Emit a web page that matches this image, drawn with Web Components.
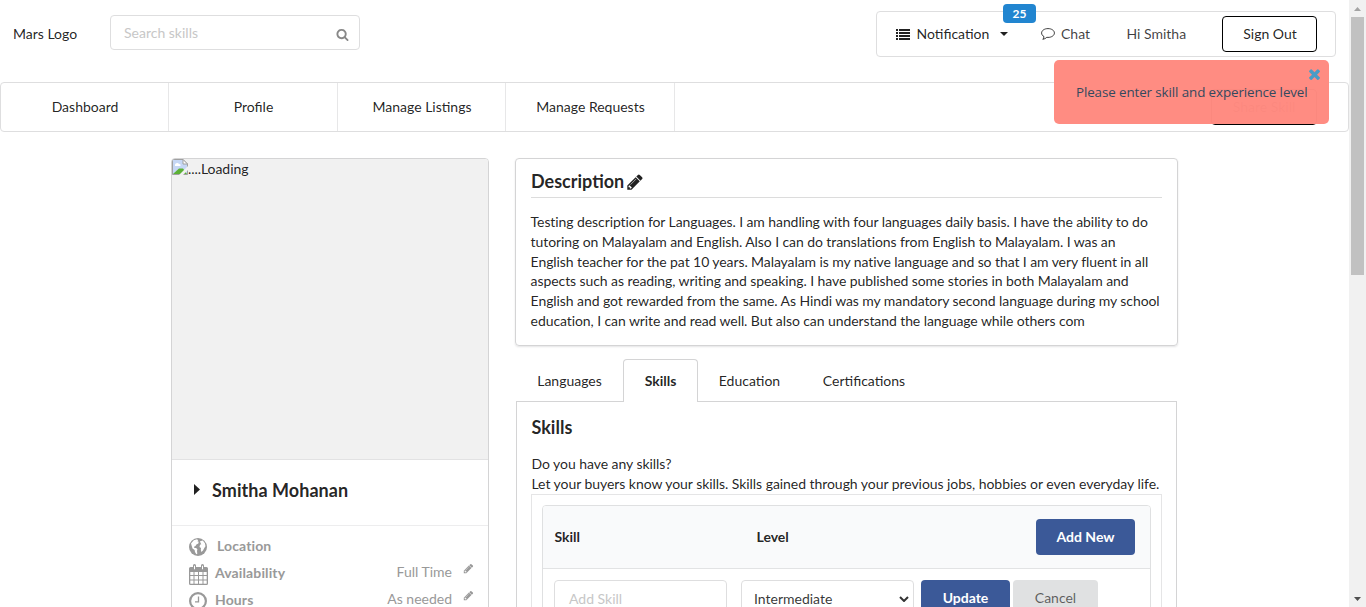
<!DOCTYPE html>
<html lang="en">
<head>
<meta charset="utf-8">
<title>Profile</title>
<style>
html,body{margin:0;height:100%;overflow:hidden;background:#fff}
body{font:14px/20px Lato,"Liberation Sans",sans-serif;color:rgba(0,0,0,.87)}
</style>
</head>
<body>
<mars-app></mars-app>
<script>
const define = (name, html, setup) => customElements.define(name, class extends HTMLElement {
  constructor() {
    super();
    const t = document.createElement('template');
    t.innerHTML = '<style>*{box-sizing:border-box}:host([hidden]){display:none}</style>' + html;
    this.attachShadow({mode: 'open'}).append(t.content.cloneNode(true));
  }
  connectedCallback() { if (setup) setup(this, this.shadowRoot); }
});

const icons = {
  pencil: ['0 0 1792 1792', '<path d="M491 1536l91-91-235-235-91 91v107h128v128h107zm523-928q0-22-22-22-10 0-17 7l-542 542q-7 7-7 17 0 22 22 22 10 0 17-7l542-542q7-7 7-17zm-54-192l416 416-832 832h-416v-416zm683 96q0 53-37 90l-166 166-416-416 166-165q36-38 90-38 53 0 91 38l235 234q37 39 37 91z"/>'],
  search: ['0 0 1792 1792', '<path d="M1216 832q0-185-131.5-316.5t-316.5-131.5-316.5 131.5-131.5 316.5 131.5 316.5 316.5 131.5 316.5-131.5 131.5-316.5zm512 832q0 52-38 90t-90 38q-54 0-90-38l-343-342q-179 124-399 124-143 0-273.5-55.5t-225-150-150-225-55.5-273.5 55.5-273.5 150-225 225-150 273.5-55.5 273.5 55.5 225 150 150 225 55.5 273.5q0 220-124 399l343 343q37 37 37 90z"/>'],
  times: ['298 214 1196 1344', '<path d="M1490 1322q0 40-28 68l-136 136q-28 28-68 28t-68-28l-294-294-294 294q-28 28-68 28t-68-28l-136-136q-28-28-28-68t28-68l294-294-294-294q-28-28-28-68t28-68l136-136q28-28 68-28t68 28l294 294 294-294q28-28 68-28t68 28l136 136q28 28 28 68t-28 68l-294 294 294 294q28 28 28 68z"/>'],
  list: ['0 0 14 11', '<path d="M0 0h2v2H0zM3 0h11v2H3zM0 3h2v2H0zM3 3h11v2H3zM0 6h2v2H0zM3 6h11v2H3zM0 9h2v2H0zM3 9h11v2H3z"/>'],
  comment: ['0 0 14 12', '<path fill="none" stroke="currentColor" d="M7 .6c3.6 0 6.4 1.9 6.4 4.4S10.600 9.400 7 9.400l-1.200-.1C4.600 10.500 3.300 11 1.800 11.300c.7-.8 1.100-1.500 1.200-2.700C1.500 7.800.6 6.500.6 5 .6 2.500 3.400.6 7 .6z"/>'],
  globe: ['0 0 18 18', '<circle cx="9" cy="9" r="9"/><path fill="#fff" d="M2 5.500L4.800 2.300 8 1.200l1.200 1-.8 1 1.300.6-.4 1.600-1.900 1-.9 1.700-1.500.7.4 1.100 1.700.1 1.300 1.200-.4 1.700.3 2.800-1 .6-1.300-2.400-.4-2-2.100-1.500zM11 3.200l2.800-.7 2.100 2.800.6 3-1.200 1.700-1.300 2.500-1.600 1.500-.6-2.300.2-1.600-1.500-1.200.5-2.100 1.300-.6-.7-1.200z"/>'],
  calendar: ['0 0 19 21', '<path fill-rule="evenodd" d="M1.500 3H4V1.800C4 .8 4.600 0 5.500 0S7 .8 7 1.800V3h5V1.800c0-1 .6-1.800 1.500-1.800S15 .8 15 1.800V3h2.500A1.500 1.500 0 0119 4.500v15a1.500 1.500 0 01-1.500 1.500h-16A1.500 1.500 0 010 19.500v-15A1.500 1.500 0 011.500 3zM5 1.700v3.500h1V1.700zM13 1.700v3.500h1V1.700zM1.300 8v3h3.200V8zM5.500 8v3h3.500V8zM10 8v3h3.500V8zM14.500 8v3h3.200V8zM1.300 12v3.400h3.200V12zM5.500 12v3.400H9V12zM10 12v3.400h3.500V12zM14.500 12v3.400h3.200V12zM1.300 16.400v3.300h3.200v-3.300zM5.500 16.400v3.300H9v-3.300zM10 16.400v3.300h3.500v-3.300zM14.500 16.400v3.300h3.200v-3.300z"/>'],
  clock: ['0 0 18 18', '<circle cx="9" cy="9" r="7.900" fill="none" stroke="currentColor" stroke-width="2.200"/><path fill="none" stroke="currentColor" stroke-width="1.300" d="M9.500 4.500v5.300H6"/>'],
  down: ['0 0 8 4', '<path d="M0 0h8L4 4z"/>'],
  up: ['0 0 8 4', '<path d="M0 4h8L4 0z"/>'],
  right: ['0 0 6 11', '<path d="M0 0l6 5.500L0 11z"/>'],
  chevron: ['0 0 10 6', '<path fill="none" stroke="currentColor" stroke-width="2" d="M1 1l4 4 4-4"/>'],
  broken: ['0 0 16 16', '<path fill="#c6d7f5" stroke="#a0a0a0" d="M.5.500h10.500l4.500 4.500v10.500H.5z"/><path fill="#fff" stroke="#a0a0a0" d="M11 .5V5h4.500z"/><path fill="#fff" d="M3 6c0-2 3-3 4-1 2 0 2 2 1 2H3z"/><path fill="#5cb135" d="M1 15l6-5.500h4L15 15z"/><path fill="#f1f1f1" d="M7 16l9-9v4l-5 5z"/>']
};
define('mars-icon', '<style>:host{display:inline-block;flex:none;width:14px;height:14px}svg{display:block;width:100%;height:100%;fill:currentColor}</style><svg preserveAspectRatio="none"></svg>', (host, root) => {
  const [box, body] = icons[host.getAttribute('name')];
  const svg = root.querySelector('svg');
  svg.setAttribute('viewBox', box);
  svg.innerHTML = body;
});

define('mars-button', `<style>
:host{display:inline-flex;align-items:center;justify-content:center;height:36px;border-radius:4px;font-weight:700;background:#3b5998;color:#fff;flex:none;box-sizing:border-box}
:host([kind=outline]){background:#fff;color:rgba(0,0,0,.87);font-weight:400;border:1px solid #000}
:host([kind=muted]){background:#e0e1e2;color:rgba(0,0,0,.6);font-weight:400}
</style><slot></slot>`);

define('top-bar', `<style>
:host{display:flex;align-items:flex-start;height:82px;padding:11px 13px 0}
.logo{margin-top:13px;width:97px}
.search{display:flex;align-items:center;justify-content:space-between;width:250px;height:35px;margin-top:4px;padding:0 10px 0 13px;border:1px solid #dededf;border-radius:4px;color:#c7c7c7}
.search mars-icon{width:13px;height:13px;margin-top:3px;color:#888}
.menu{display:flex;align-items:center;width:460px;height:46px;margin-left:auto;padding:0 18px 0 19px;border:1px solid #dededf;border-radius:4px;color:rgba(0,0,0,.75)}
.notice{position:relative;display:flex;align-items:center;width:145px;color:rgba(0,0,0,.87)}
.list{height:11px;margin-right:6.500px}
.notice .down{width:8px;height:4px;margin-left:11px}
.badge{position:absolute;left:107px;top:-20px;width:33px;height:19px;border-radius:4px;background:#2185d0;color:#fff;font-size:12px;line-height:19px;font-weight:700;text-align:center}
.chat{display:flex;align-items:center;width:85.500px}
.chat mars-icon{height:12px;margin-right:6px}
.sign{width:95px;margin-left:auto;padding-left:1px}
</style>
<span class="logo">Mars Logo</span>
<div class="search"><span>Search skills</span><mars-icon name="search"></mars-icon></div>
<div class="menu"><div class="notice"><mars-icon class="list" name="list"></mars-icon><span>Notification</span><mars-icon class="down" name="down"></mars-icon><span class="badge">25</span></div>
<div class="chat"><mars-icon name="comment"></mars-icon><span>Chat</span></div><span>Hi Smitha</span><mars-button class="sign" kind="outline">Sign Out</mars-button></div>`);

define('nav-bar', `<style>
:host{position:relative;display:grid;grid-template-columns:168px 169px 168px 169px 1fr;box-sizing:border-box;height:50px;border:1px solid #dededf;border-radius:4px}
span{display:flex;align-items:center;justify-content:center;padding-left:1px;border-right:1px solid #e7e7e8}
.share{justify-self:end;width:106px;height:36px;margin:6px 31px 0 0}
</style><span>Dashboard</span><span>Profile</span><span>Manage Listings</span><span>Manage Requests</span><mars-button class="share" kind="outline">Share Skill</mars-button>`);

define('toast-message', `<style>
:host{position:absolute;left:1054px;top:60px;width:275px;height:64px;box-sizing:border-box;padding:22px 0 0 22px;border-radius:5px;background:rgba(255,138,128,.985);color:#34495e;font-family:"Open Sans","Noto Sans",sans-serif;font-size:13.400px;letter-spacing:-.11px;white-space:nowrap}
mars-icon{position:absolute;right:9px;top:8px;width:11px;height:12px;color:#4a9cc7}
</style><slot></slot><mars-icon name="times"></mars-icon>`);

define('detail-row', `<style>
:host{display:flex;height:27px;color:#999;line-height:20px}
.ico{width:20px;height:18px;margin-right:7px}
.ico mars-icon{display:block;width:18px;height:18px;margin-top:2px}
b{font-weight:700;letter-spacing:.12px}.value{margin-left:auto;margin-top:-1px}
.edit{width:11px;height:11px;margin:0 0 0 11px}
</style><span class="ico"></span><b></b><span class="value"></span>`, (host, root) => {
  const a = n => host.getAttribute(n);
  const ico = document.createElement('mars-icon');
  ico.setAttribute('name', a('icon'));
  root.querySelector('.ico').append(ico);
  if (a('icon') === 'calendar') { ico.style.cssText = 'width:19px;height:21px;margin-top:1px'; }
  root.querySelector('b').textContent = a('label');
  root.querySelector('b').style.marginLeft = a('icon') === 'globe' ? '1px' : '-1px';
  root.querySelector('.value').textContent = a('value') || '';
  if (a('value')) {
    const edit = document.createElement('mars-icon');
    edit.setAttribute('name', 'pencil');
    edit.className = 'edit';
    root.append(edit);
  }
});

define('profile-card', `<style>
:host{display:block;box-sizing:border-box;width:318px;height:520px;border:1px solid #d4d4d5;border-radius:4px;overflow:hidden}
.photo{display:flex;height:301px;background:#f1f1f1;border-bottom:1px solid #e2e2e3}
.photo mars-icon{width:16px;height:16px}.photo span{letter-spacing:-.06px}
.name{display:flex;align-items:center;height:66px;padding:0 0 5px 22px;border-bottom:1px solid #ededee;font-size:18px;font-weight:700;letter-spacing:.05px}
.name mars-icon{width:6px;height:11px;margin:0 12px 1px 0}
.rows{padding:10px 14px 0 17px}
</style>
<div class="photo"><mars-icon name="broken"></mars-icon><span>....Loading</span></div>
<div class="name"><mars-icon name="right"></mars-icon><span>Smitha Mohanan</span></div>
<div class="rows"><detail-row icon="globe" label="Location"></detail-row><detail-row icon="calendar" label="Availability" value="Full Time"></detail-row><detail-row icon="clock" label="Hours" value="As needed"></detail-row></div>`);

define('description-card', `<style>
:host{display:block;box-sizing:border-box;width:663px;height:188px;margin-left:-1px;padding:10px 15px;border:1px solid #d4d4d5;border-radius:4px;box-shadow:0 1px 2px rgba(34,36,38,.12)}
h3{display:flex;align-items:center;height:29px;margin:0 0 14px;padding-bottom:4px;border-bottom:1px solid #dcdcdc;font-size:18px;font-weight:700}
mars-icon{width:18px;height:18px;margin:2px 0 0 2px}
p{margin:0 0 0 -.4px;line-height:19.8px;letter-spacing:-.084px;white-space:nowrap}
</style><h3>Description<mars-icon name="pencil"></mars-icon></h3>
<p>Testing description for Languages. I am handling with four languages daily basis. I have the ability to do<br>tutoring on Malayalam and English. Also I can do translations from English to Malayalam. I was an<br>English teacher for the pat 10 years. Malayalam is my native language and so that I am very fluent in all<br>aspects such as reading, writing and speaking. I have published some stories in both Malayalam and<br>English and got rewarded from the same. As Hindi was my mandatory second language during my school<br>education, I can write and read well. But also can understand the language while others com</p>`);

define('tab-strip', `<style>
:host{display:flex;height:43px;margin:13px 0 -1px;position:relative}
span{display:flex;align-items:center;justify-content:center}
.a{width:107px}.b{width:75px;border:1px solid #d4d4d5;border-bottom:0;border-radius:4px 4px 0 0;background:#fff;font-weight:700}.c{width:103px}.d{width:126px}
</style><span class="a">Languages</span><span class="b">Skills</span><span class="c">Education</span><span class="d">Certifications</span>`);

define('skill-table', `<style>
:host{display:block;box-sizing:border-box;height:200px;padding:10px;border:1px solid #e5e5e6}
.table{height:180px;border:1px solid #dfe0e1;border-radius:4px;overflow:hidden}
.head{display:grid;grid-template-columns:202px 1fr 99px;align-items:center;height:63px;padding:0 15px 0 11.500px;background:#f9fafb;border-bottom:1px solid #e2e3e4;font-weight:700}
.edit{display:flex;padding:11px 11px 0}
.field{display:flex;align-items:center;width:173px;height:38px;border:1px solid #dededf;border-radius:4px;margin-right:14px;padding:0 14px;color:#c7c7c7}
.select{margin-right:7px;padding:0 4px 0 12px;justify-content:space-between;color:rgba(0,0,0,.8)}
.select mars-icon{width:10px;height:6px}
.update{width:89px;margin-right:3px}.cancel{width:85px}
</style><div class="table"><div class="head"><span>Skill</span><span>Level</span><mars-button>Add New</mars-button></div>
<div class="edit"><div class="field">Add Skill</div><div class="field select">Intermediate<mars-icon name="chevron"></mars-icon></div><mars-button class="update">Update</mars-button><mars-button class="cancel" kind="muted">Cancel</mars-button></div></div>`);

define('skills-panel', `<style>
:host{display:block;box-sizing:border-box;width:661px;height:320px;padding:15px 14px;border:1px solid #d4d4d5}
h3{margin:0 0 17px .5px;font-size:18px;line-height:20px;font-weight:700}p{margin:0 0 0 .5px;white-space:nowrap;letter-spacing:-.053px}
</style><h3>Skills</h3><p>Do you have any skills?<br>Let your buyers know your skills. Skills gained through your previous jobs, hobbies or even everyday life.</p><skill-table></skill-table>`);

define('page-scrollbar', `<style>
:host{display:grid;grid-template-rows:17px 258px 1fr 17px;justify-items:center;background:#f1f1f1}
mars-icon{width:7px;height:4px;align-self:center;color:#505050}mars-icon:first-of-type{color:#a3a3a3}
i{width:13px;background:#c1c1c1}
</style><mars-icon name="up"></mars-icon><i></i><b></b><mars-icon name="down"></mars-icon>`);

define('mars-app', `<style>
:host{position:relative;display:grid;grid-template-columns:1fr 17px;height:607px;overflow:hidden}
.page{height:607px;overflow:hidden}
main{display:grid;grid-template-columns:318px 662px;column-gap:27px;padding:26px 0 0 171px}
</style><div class="page"><top-bar></top-bar><nav-bar></nav-bar><main><profile-card></profile-card><section><description-card></description-card><tab-strip></tab-strip><skills-panel></skills-panel></section></main></div><page-scrollbar></page-scrollbar><toast-message>Please enter skill and experience level</toast-message>`);
</script>
</body>
</html>
